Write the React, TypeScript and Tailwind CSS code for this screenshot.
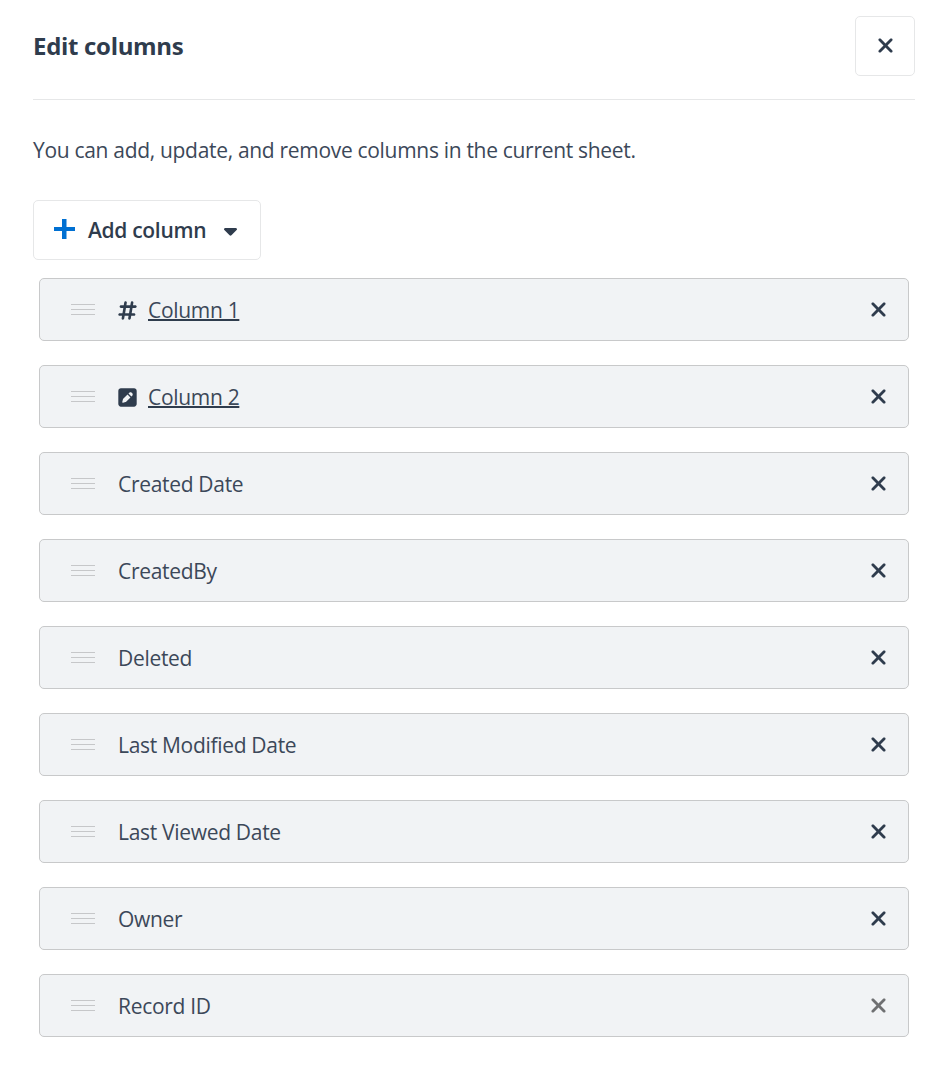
import { useState } from 'react';
import { FaCaretDown, FaHashtag, FaSquarePen, FaXmark } from 'react-icons/fa6';

type Column = {
  name: string;
  type?: 'number' | 'text';
  locked?: boolean;
};

const initialColumns: Column[] = [
  { name: 'Column 1', type: 'number' },
  { name: 'Column 2', type: 'text' },
  { name: 'Created Date' },
  { name: 'CreatedBy' },
  { name: 'Deleted' },
  { name: 'Last Modified Date' },
  { name: 'Last Viewed Date' },
  { name: 'Owner' },
  { name: 'Record ID', locked: true },
];

function DragHandle() {
  return (
    <span className="flex w-6 cursor-move flex-col gap-1">
      <span className="h-px bg-[#c6c7c9]" />
      <span className="h-px bg-[#c6c7c9]" />
      <span className="h-px bg-[#c6c7c9]" />
    </span>
  );
}

function ColumnRow({ column, onRemove }: { column: Column; onRemove: () => void }) {
  return (
    <li className="flex h-[63px] items-center rounded-[5px] border border-[#c8c9ca] bg-[#f1f3f5] pr-[21px] pl-[30.5px]">
      <DragHandle />
      <div className="ml-[23.5px] flex flex-1 items-center">
        {column.type === 'number' && <FaHashtag className="mt-px mr-[11px] h-[21px] w-[19px]" />}
        {column.type === 'text' && <FaSquarePen className="mt-px mr-[11px] h-[21px] w-[19px]" />}
        {column.type ? (
          <button className="cursor-pointer text-[#3c4859] underline decoration-[#2f3c4d] decoration-2 underline-offset-1">
            {column.name}
          </button>
        ) : (
          <span className="text-[#3c4859]">{column.name}</span>
        )}
      </div>
      <button
        disabled={column.locked}
        onClick={onRemove}
        aria-label={`Remove ${column.name}`}
        className={column.locked ? 'pb-px text-[#6f7072]' : 'cursor-pointer pb-px'}
      >
        <FaXmark className="h-[23px] w-[17px]" />
      </button>
    </li>
  );
}

export default function App() {
  const [columns, setColumns] = useState(initialColumns);

  const removeColumn = (name: string) => {
    setColumns(columns.filter((c) => c.name !== name));
  };

  return (
    <div className="min-h-screen bg-white pt-4 pr-[17px] pl-[33px] font-['Open_Sans',sans-serif] text-[21px] leading-[30px] tracking-[-0.31px] text-[#2f3c4d]">
      <header className="flex h-[84px] items-start justify-between border-b border-[#e6e7e8]">
        <h1 className="mt-[15px] text-[24px] font-bold">Edit columns</h1>
        <button
          aria-label="Close"
          className="flex size-[60px] cursor-pointer items-center justify-center rounded-[5px] border border-[#e6e7e8] pb-px pl-px"
        >
          <FaXmark className="h-[23px] w-[17px]" />
        </button>
      </header>

      <p className="mt-[35px] text-[#3c4859]">You can add, update, and remove columns in the current sheet.</p>

      <button className="mt-[35px] flex h-[60px] w-[228px] cursor-pointer items-center rounded-[5px] border border-[#e6e7e8] pl-5 font-semibold">
        <svg viewBox="0 0 21 20" className="mb-0.5 h-5 w-[21px] text-[#0070d2]" fill="currentColor">
          <path d="M8 0h4.5v8H21v4h-8.5v8H8v-8H0V8h8z" />
        </svg>
        <span className="ml-[13px]">Add column</span>
        <FaCaretDown className="ml-[17.5px] h-[21px] w-[13px]" />
      </button>

      <ul className="mt-[18px] mr-[6px] ml-[6px] flex flex-col gap-6">
        {columns.map((column) => (
          <ColumnRow key={column.name} column={column} onRemove={() => removeColumn(column.name)} />
        ))}
      </ul>
    </div>
  );
}
